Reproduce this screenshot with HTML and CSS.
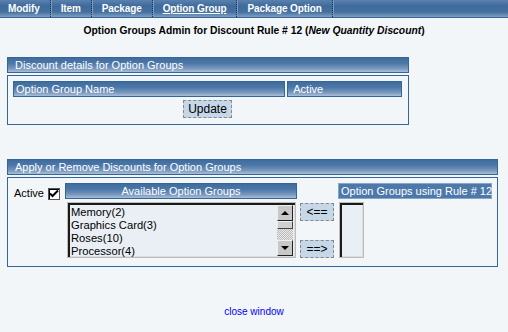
FILE: index.html
```html
<!DOCTYPE html>
<html lang="en">
<head>
  <meta charset="UTF-8">
  <title>Option Groups Admin</title>
  <link rel="stylesheet" href="styles.css">
</head>
<body>
  <div class="nav">
    <a class="nav-item first">Modify</a>
    <a class="nav-item">Item</a>
    <a class="nav-item">Package</a>
    <a class="nav-item current">Option Group</a>
    <a class="nav-item">Package Option</a>
  </div>

  <h1 class="title">Option Groups Admin for Discount Rule # 12 (<i>New Quantity Discount</i>)</h1>

  <div class="section details">
    <div class="bar">Discount details for Option Groups</div>
    <div class="box">
      <div class="cols">
        <div class="bar col-name">Option Group Name</div>
        <div class="bar col-active">Active</div>
      </div>
      <div class="actions">
        <button class="btn">Update</button>
      </div>
    </div>
  </div>

  <div class="section apply">
    <div class="bar">Apply or Remove Discounts for Option Groups</div>
    <div class="box assign">
      <div class="active-cell">
        <span>Active</span>
        <span class="check">
          <svg width="10" height="10" viewBox="0 0 10 10"><path d="M1 4.5 L3.5 7 L9 1.5" fill="none" stroke="#000" stroke-width="2"/></svg>
        </span>
      </div>
      <div class="bar center">Available Option Groups</div>
      <div></div>
      <div class="bar flat">Option Groups using Rule # 12</div>

      <div></div>
      <div class="listbox wide">
        <ul class="options">
          <li>Memory(2)</li>
          <li>Graphics Card(3)</li>
          <li>Roses(10)</li>
          <li>Processor(4)</li>
        </ul>
        <div class="scroll">
          <span class="arrow up"></span>
          <span class="thumb"></span>
          <span class="track"></span>
          <span class="arrow down"></span>
        </div>
      </div>
      <div class="move">
        <button class="btn small">&lt;==</button>
        <button class="btn small">==&gt;</button>
      </div>
      <div class="listbox narrow"></div>
    </div>
  </div>

  <div class="footer">
    <a href="#" class="close">close window</a>
  </div>
</body>
</html>
```

FILE: styles.css
```css
* {
  margin: 0;
  padding: 0;
  box-sizing: border-box;
}

body {
  font-family: 'Liberation Sans', Arial, sans-serif;
  font-size: 11px;
  background-color: #f3f6f9;
  color: #000;
}

/* top menu */
.nav {
  display: flex;
  height: 18px;
  background: linear-gradient(#5a82ae, #3f6a9b 35%, #44709f 70%, #7f9ec2);
  border-bottom: 1px solid #3a6394;
}

.nav-item {
  color: #fff;
  font-weight: bold;
  font-size: 10px;
  letter-spacing: -0.1px;
  line-height: 17px;
  padding: 0 10px;
  border-right: 1px dotted #1b355a;
  box-shadow: 1px 0 0 #7b9cc2;
  height: 17px;
}

.nav-item.first {
  padding-left: 8px;
}

.nav-item.current {
  text-decoration: underline;
}

.title {
  font-size: 10.3px;
  font-weight: bold;
  text-align: center;
  margin-top: 6px;
  line-height: 14px;
}

/* panels */
.section {
  margin-left: 7px;
}

.details {
  width: 402px;
  margin-top: 19px;
}

.apply {
  width: 491px;
  margin-top: 34px;
}

.bar {
  height: 16px;
  line-height: 14px;
  padding-left: 7px;
  color: #fff;
  font-size: 11px;
  background: linear-gradient(#3f6c9e, #4d79a9 40%, #7897bd 75%, #a9bfd8);
  border: 1px solid #336699;
  white-space: nowrap;
}

.bar.center {
  text-align: center;
  padding-left: 0;
}

.bar.flat {
  background: #4d79aa;
  border-color: #86a5c8;
  padding-left: 2px;
}

.box {
  margin-top: 2px;
  border: 1px solid #336699;
}

.details .box {
  height: 50px;
  padding: 5px 6px 0 5px;
}

.cols {
  display: flex;
  gap: 2px;
}

.col-name {
  width: 273px;
  padding-left: 2px;
}

.col-active {
  width: 115px;
  padding-left: 5px;
}

.actions {
  display: flex;
  justify-content: center;
  margin-top: 3px;
}

.btn {
  font-family: 'Liberation Sans', Arial, sans-serif;
  font-size: 12px;
  background-color: #c6d8e8;
  border: 1px dashed #888;
  color: #000;
  height: 18px;
  width: 49px;
  line-height: 16px;
}

.btn.small {
  width: 34px;
  height: 18px;
}

/* assign grid */
.assign {
  display: grid;
  grid-template-columns: 51px 232px 41px 154px;
  grid-template-rows: 16px 56px;
  row-gap: 3px;
  height: 90px;
  padding: 5px 0 0 6px;
}

.active-cell {
  display: flex;
  align-items: flex-end;
  gap: 4px;
}

.active-cell span {
  line-height: 12px;
}

.check {
  width: 12px;
  height: 12px;
  background: #fff;
  border: 1px solid #555;
  box-shadow: inset 1px 1px 0 #000;
  display: flex;
  align-items: center;
  justify-content: center;
  margin-bottom: -1px;
}

.listbox {
  background-color: #e9eff4;
  border: 1px solid #bcbcbc;
  box-shadow: inset 2px 2px 0 #1a1a1a, inset -1px -1px 0 #dcdcdc;
  height: 56px;
}

.wide {
  display: flex;
  width: 229px;
  margin-left: 2px;
  padding: 2px 2px 1px 3px;
}

.narrow {
  width: 25px;
  margin-left: 1px;
}

.options {
  list-style: none;
  flex: 1;
  font-size: 11.2px;
  line-height: 13px;
  padding-top: 1px;
}

.scroll {
  width: 16px;
  display: flex;
  flex-direction: column;
}

.arrow {
  height: 16px;
  background-color: #c8c8c8;
  border: 1px solid;
  border-color: #eee #222 #222 #eee;
  position: relative;
}

.arrow::after {
  content: '';
  position: absolute;
  left: 3px;
  top: 5px;
  border-left: 4px solid transparent;
  border-right: 4px solid transparent;
}

.arrow.up::after {
  border-bottom: 4px solid #000;
}

.arrow.down::after {
  border-top: 4px solid #000;
}

.thumb {
  height: 8px;
  background-color: #d0d0d0;
  border: 1px solid;
  border-color: #eee #444 #444 #eee;
}

.track {
  flex: 1;
  background-color: #d8d8d8;
  background-image: repeating-conic-gradient(#b8b8b8 0 25%, #ececec 0 50%);
  background-size: 2px 2px;
}

.move {
  display: flex;
  flex-direction: column;
  justify-content: space-between;
  align-items: center;
  padding: 1px 2px 0 1px;
}

.footer {
  text-align: center;
  margin-top: 38px;
}

.close {
  color: #0000ff;
  text-decoration: none;
  font-size: 10px;
}
```
